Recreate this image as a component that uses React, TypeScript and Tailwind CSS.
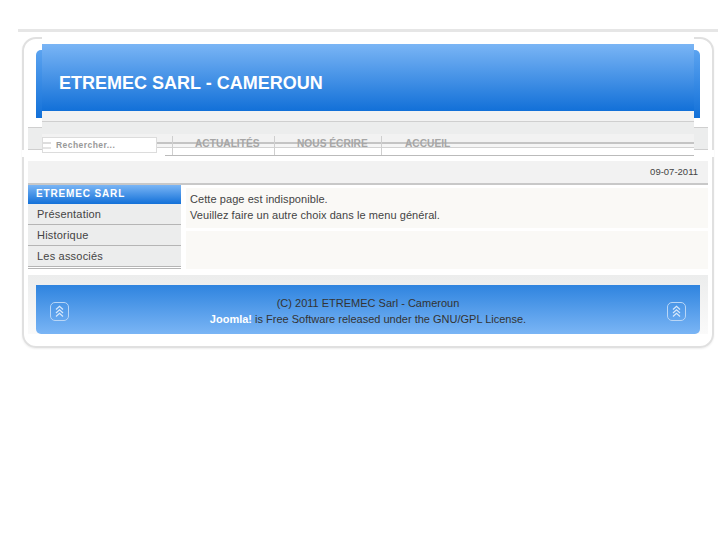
const font = "font-['Liberation_Sans',Arial,sans-serif]";

function TopIcon() {
  return (
    <span className="mt-[3px] flex h-[19px] w-[19px] items-center justify-center rounded-[5px] border-[1.5px] border-[#b9d6f6]">
      <svg width="11" height="13" viewBox="0 0 11 13" fill="none" stroke="#d8e9fb" strokeWidth="1.2">
        <path d="M2 4.5 5.5 1.2 9 4.5" />
        <path d="M2 8 5.5 4.7 9 8" />
        <path d="M2 11.5 5.5 8.2 9 11.5" />
      </svg>
    </span>
  );
}

function NavItem({ label, width }: { label: string; width: string }) {
  return (
    <div className={`${width} flex h-[19px] items-center border-r border-[#cfcfcf] pl-[22px] pb-[3px] text-[10.2px] font-bold text-[#a6a6a6]`}>
      {label}
    </div>
  );
}

function SideItem({ label }: { label: string }) {
  return (
    <div className="flex h-[21px] items-center border-b border-[#b5b5b5] bg-[#eceded] pl-[9px] text-[11px] tracking-[0.2px] text-[#444]">
      {label}
    </div>
  );
}

export default function App() {
  return (
    <div className={`${font} min-h-[545px] bg-white pt-[29px]`}>
      <div className="ml-[18px] h-[3px] w-[700px] bg-[#e6e6e6]" />

      <div className="relative ml-[22px] mt-[5px] h-[311px] w-[692px] rounded-[14px] border-2 border-[#e0e0e0] px-[4px] shadow-[0_1px_2px_#eee]">
        {/* Breaks in the frame */}
        <div className="absolute left-[18px] right-[18px] top-[-2px] h-[2px] bg-white" />
        <div className="absolute left-[-2px] top-[111px] h-[7px] w-[2px] bg-white" />
        <div className="absolute right-[-2px] top-[111px] h-[7px] w-[2px] bg-white" />

        {/* Blue header */}
        <div className="mt-[5px] px-[8px]">
          <div className="relative h-[74px]">
            <div className="absolute inset-x-0 bottom-0 top-[6px] rounded-t-[5px] bg-[linear-gradient(#5ba3f0,#1270d8)]" />
            <div className="relative mx-[6px] flex h-[67px] items-center bg-[linear-gradient(#7ab5f5,#1270d8)] pl-[17px] pt-[11px] text-[18px] font-bold text-white">
              ETREMEC SARL - CAMEROUN
            </div>
            <div className="relative mx-[6px] h-[7px] bg-[#f2f2f2]" />
          </div>
        </div>

        {/* Search and menu */}
        <div className="mx-[14px] h-[4px] border-b border-[#cfcfcf] bg-[#f2f2f2]" />
        <div className="flex h-[34px]">
          <div className="w-[14px] pt-[5px]">
            <div className="h-[23px] border-y border-[#cfcfcf] bg-[#eceded]" />
          </div>
          <div className="relative flex-1">
            <div className="h-[12px] bg-[#eceded]" />
            <div className="h-[8px] bg-[#f2f2f2]" />
            <div className="h-[2px] bg-[#c4c4c4]" />
            <div className="h-[3px] bg-[#f5f5f5]" />
            <div className="h-[1px] bg-[#d2d2d2]" />
            <div className="h-[7px] bg-white" />
            <div className="ml-[123px] h-[1px] bg-[#bbbbbb]" />

            <div className="absolute left-0 top-[15px] flex h-[16px] w-[115px] items-center border border-[#dcdcdc] bg-white pl-[13px] text-[8.5px] font-bold tracking-[0.45px] text-[#999]">
              Rechercher...
              <div className="absolute left-0 top-[4px] h-[2px] w-[8px] bg-[#dddddd]" />
              <div className="absolute left-0 top-[9px] h-[2px] w-[8px] bg-[#e4e4e4]" />
            </div>
            <div className="absolute left-[130px] top-[14px] flex border-l border-[#cfcfcf]">
              <NavItem label="ACTUALITÉS" width="w-[102px]" />
              <NavItem label="NOUS ÉCRIRE" width="w-[107px]" />
              <div className="flex h-[19px] items-center pb-[3px] pl-[23px] text-[10.2px] font-bold text-[#a6a6a6]">ACCUEIL</div>
            </div>
          </div>
          <div className="w-[14px] pt-[5px]">
            <div className="h-[23px] border-y border-[#cfcfcf] bg-[#eceded]" />
          </div>
        </div>

        <div className="h-[5px]" />

        {/* Date bar */}
        <div className="flex h-[24px] items-center justify-end border-b-2 border-[#c8c8c8] bg-[#f2f2f2] pr-[10px] text-[9.5px] text-[#444]">
          09-07-2011
        </div>

        <div className="flex">
          {/* Sidebar */}
          <div className="w-[153px]">
            <div className="flex h-[19px] items-center bg-[linear-gradient(#7ab5f5,#1270d8)] pb-[2px] pl-[8px] text-[10px] font-bold tracking-[0.85px] text-white">
              ETREMEC SARL
            </div>
            <SideItem label="Présentation" />
            <SideItem label="Historique" />
            <SideItem label="Les associés" />
            <div className="mt-[1px] h-[1px] bg-[#b5b5b5]" />
          </div>

          {/* Content */}
          <div className="ml-[5px] flex-1 pt-[3px]">
            <div className="h-[40px] bg-[#faf9f6] pl-[4px] pt-[3px] text-[11px] leading-[16px] tracking-[0.07px] text-[#444]">
              <p>Cette page est indisponible.</p>
              <p>Veuillez faire un autre choix dans le menu général.</p>
            </div>
            <div className="mt-[3px] h-[38px] bg-[#faf9f6]" />
          </div>
        </div>

        {/* Footer */}
        <div className="mt-[6px] bg-[linear-gradient(#eceded,#fafafa)] px-[8px] pt-[10px]">
          <div className="flex h-[49px] items-center justify-between rounded-b-[5px] bg-[linear-gradient(#2f84df,#7ab5f5)] px-[14px]">
            <TopIcon />
            <div className="pt-[3px] text-center text-[11px] leading-[16px] text-[#333]">
              <p>(C) 2011 ETREMEC Sarl - Cameroun</p>
              <p>
                <span className="font-bold text-white">Joomla!</span> is Free Software released under the GNU/GPL License.
              </p>
            </div>
            <TopIcon />
          </div>
        </div>
      </div>
    </div>
  );
}
